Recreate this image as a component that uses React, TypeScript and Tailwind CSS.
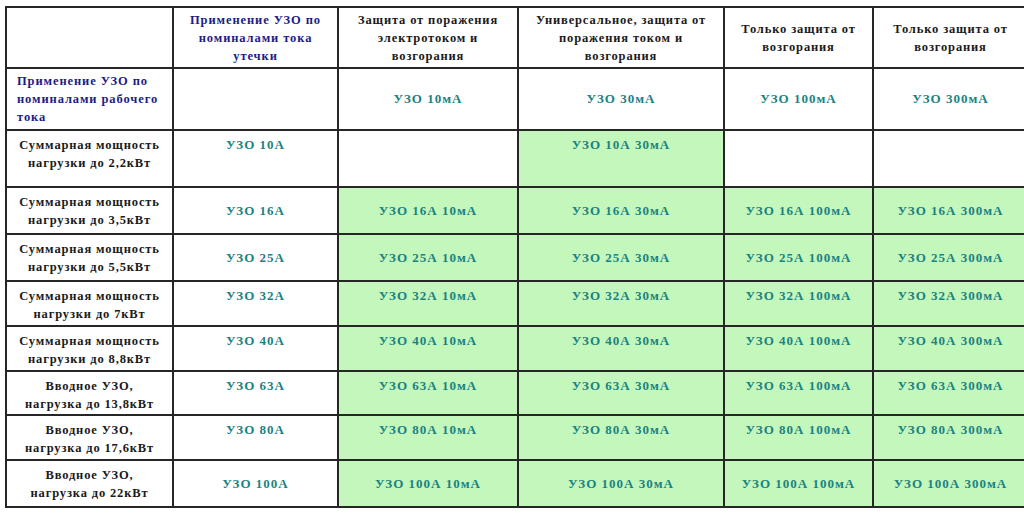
const BLUE = "text-[#1c1c86] tracking-[0.9px]";
const TEAL = "text-[#1b8282] text-[13px] tracking-[1px]";

type Cell = { text?: string; green?: boolean };
type Row = { label: string; h: string; top?: boolean; cells: Cell[] };

const header = [
    "Защита от поражения\nэлектротоком и\nвозгорания",
    "Универсальное, защита от\nпоражения током и\nвозгорания",
    "Только защита от\nвозгорания",
    "Только защита от\nвозгорания",
];

// builds the 4 green cells for one current rating
const greens = (a: string): Cell[] =>
    ["10мА", "30мА", "100мА", "300мА"].map((m) => ({ text: `УЗО ${a} ${m}`, green: true }));

const rows: Row[] = [
    {
        label: "Суммарная мощность\nнагрузки до 2,2кВт",
        h: "h-[57px]",
        top: true,
        cells: [{ text: "УЗО 10А" }, {}, { text: "УЗО 10А 30мА", green: true }, {}, {}],
    },
    { label: "Суммарная мощность\nнагрузки до 3,5кВт", h: "h-[47px]", cells: [{ text: "УЗО 16А" }, ...greens("16А")] },
    { label: "Суммарная мощность\nнагрузки до 5,5кВт", h: "h-[47px]", cells: [{ text: "УЗО 25А" }, ...greens("25А")] },
    {
        label: "Суммарная мощность\nнагрузки до 7кВт",
        h: "h-[45px]",
        top: true,
        cells: [{ text: "УЗО 32А" }, ...greens("32А")],
    },
    {
        label: "Суммарная мощность\nнагрузки до 8,8кВт",
        h: "h-[45px]",
        top: true,
        cells: [{ text: "УЗО 40А" }, ...greens("40А")],
    },
    {
        label: "Вводное УЗО,\nнагрузка до 13,8кВт",
        h: "h-[44px]",
        top: true,
        cells: [{ text: "УЗО 63А" }, ...greens("63А")],
    },
    {
        label: "Вводное УЗО,\nнагрузка до 17,6кВт",
        h: "h-[45px]",
        top: true,
        cells: [{ text: "УЗО 80А" }, ...greens("80А")],
    },
    { label: "Вводное УЗО,\nнагрузка до 22кВт", h: "h-[47px]", cells: [{ text: "УЗО 100А" }, ...greens("100А")] },
];

const td = "border-2 border-[#262626] text-center px-1 whitespace-pre-line";
const black = "tracking-[0.85px]";

export default function App() {
    return (
        <div className="w-[1024px] h-[521px] overflow-hidden bg-white pl-[5px] pt-[6px]">
            <table
                className="border-collapse table-fixed w-[1022px] font-bold text-[12.5px] leading-[18px] text-[#1a1a1a]"
                style={{ fontFamily: '"Liberation Serif", "DejaVu Serif", serif' }}
            >
                <colgroup>
                    <col className="w-[167px]" />
                    <col className="w-[165px]" />
                    <col className="w-[180px]" />
                    <col className="w-[206px]" />
                    <col className="w-[149px]" />
                    <col className="w-[155px]" />
                </colgroup>
                <tbody>
                    <tr className="h-[61px]">
                        <td className={td}></td>
                        <td className={`${td} ${BLUE}`}>{"Применение УЗО по\nноминалами тока\nутечки"}</td>
                        {header.map((h, i) => (
                            <td key={i} className={`${td} ${black}`}>
                                {h}
                            </td>
                        ))}
                    </tr>
                    <tr className="h-[62px]">
                        <td className={`${td} ${BLUE} !text-left !pl-[10px]`}>
                            {"Применение УЗО по\nноминалами рабочего\nтока"}
                        </td>
                        <td className={td}></td>
                        {["УЗО 10мА", "УЗО 30мА", "УЗО 100мА", "УЗО 300мА"].map((t) => (
                            <td key={t} className={`${td} ${TEAL}`}>
                                {t}
                            </td>
                        ))}
                    </tr>
                    {rows.map((row) => (
                        <tr key={row.label} className={row.h}>
                            <td className={`${td} ${black} ${row.top ? "align-top pt-[5px]" : ""}`}>{row.label}</td>
                            {row.cells.map((c, i) => (
                                <td
                                    key={i}
                                    className={`${td} ${TEAL} ${c.green ? "bg-[#c3f7bb]" : ""} ${
                                        row.top ? "align-top pt-[5px]" : ""
                                    }`}
                                >
                                    {c.text}
                                </td>
                            ))}
                        </tr>
                    ))}
                </tbody>
            </table>
        </div>
    );
}
